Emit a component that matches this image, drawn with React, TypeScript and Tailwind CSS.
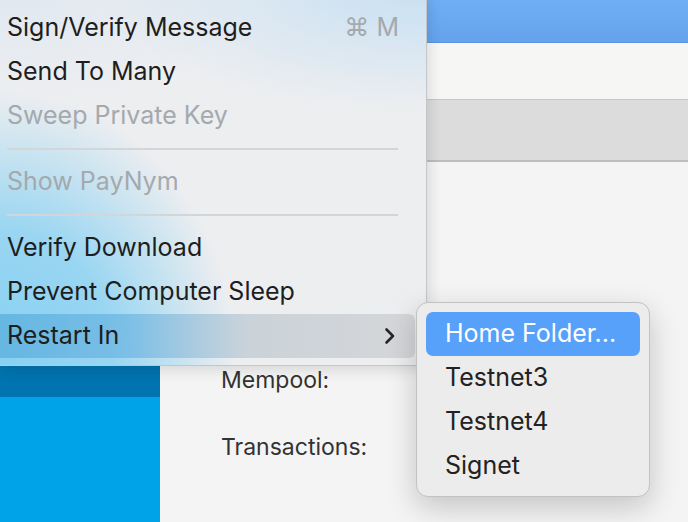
import React from "react";

function Chevron() {
  return (
    <svg width="12" height="18" viewBox="0 0 12 18" fill="none">
      <path d="M2.5 2.5 L9 9 L2.5 15.5" stroke="#262626" strokeWidth="2.6" strokeLinecap="round" strokeLinejoin="round" />
    </svg>
  );
}

function Item({ label, disabled, shortcut }: { label: string; disabled?: boolean; shortcut?: string }) {
  return (
    <div className="h-[44px] flex items-center justify-between pl-[7px] pr-[27px]">
      <span className={disabled ? "text-[#a4a9ae]" : "text-[#1e1e1e]"}>{label}</span>
      {shortcut && <span className="text-[#a4a9ae]">{shortcut}</span>}
    </div>
  );
}

function Sep() {
  return (
    <div className="h-[22px] flex items-center pl-[7px]">
      <div className="w-[391px] h-[2px] bg-[#d3d6d9]" />
    </div>
  );
}

export default function App() {
  return (
    <div className="relative w-[688px] h-[522px] overflow-hidden bg-[#f4f4f4] font-['Inter','DejaVu_Sans',sans-serif]">
      {/* background window */}
      <div className="flex flex-col h-full">
        <div className="h-[43px] bg-[linear-gradient(#70aef4,#64a2ed)] border-b border-[#5b94dd]" />
        <div className="h-[57px] bg-[#f6f6f5] border-b border-[#c6c6c6]" />
        <div className="h-[62px] bg-[#dcdcdc] border-b-2 border-[#bdbdbd]" />
        <div className="flex flex-1">
          <div className="w-[160px] bg-[#00a2e8] pt-[202px]">
            <div className="h-[33px] bg-[#0074b0]" />
          </div>
          <div className="flex-1 pl-[61px] pt-[202px] text-[23px] text-[#333333]">
            <div className="h-[32px] flex items-center">Mempool:</div>
            <div className="h-[35px]" />
            <div className="h-[32px] flex items-center">Transactions:</div>
          </div>
        </div>
      </div>

      {/* main menu */}
      <div className="absolute left-0 top-[-10px] w-[427px] h-[376px] rounded-br-[10px] rounded-tr-[10px] border-r border-b border-[#c3c6ca] shadow-[2px_4px_14px_rgba(0,0,0,0.12)] bg-[radial-gradient(ellipse_235px_270px_at_0px_370px,rgba(136,209,243,1)_0%,rgba(144,211,242,0.9)_48%,rgba(236,238,240,0)_100%),radial-gradient(ellipse_330px_120px_at_100%_0%,#c7e0f3_0%,rgba(236,238,240,0)_100%),radial-gradient(ellipse_260px_110px_at_0%_0%,#dfe8f0_0%,rgba(236,238,240,0)_100%),linear-gradient(#edeef0,#edeef0)] pt-[16px] text-[25px]">
        <Item label="Sign/Verify Message" shortcut="⌘ M" />
        <Item label="Send To Many" />
        <Item label="Sweep Private Key" disabled />
        <Sep />
        <Item label="Show PayNym" disabled />
        <Sep />
        <Item label="Verify Download" />
        <Item label="Prevent Computer Sleep" />
        <div className="h-[44px] mr-[11px] rounded-r-[6px] flex items-center justify-between pl-[7px] pr-[19px] bg-[linear-gradient(to_right,rgba(96,178,224,0.85)_0%,rgba(110,182,226,0.72)_32%,rgba(196,206,214,0.85)_60%,#d5d6d8_100%)]">
          <span className="text-[#1e1e1e]">Restart In</span>
          <Chevron />
        </div>
      </div>

      {/* submenu */}
      <div className="absolute left-[416px] top-[302px] w-[234px] h-[195px] rounded-[12px] bg-[#ececec] border border-[#c2c2c2] shadow-[0_10px_30px_rgba(0,0,0,0.2)] p-[9px] text-[25px]">
        <div className="h-[44px] rounded-[7px] bg-[#57a1fa] text-white flex items-center pl-[19px]">Home Folder...</div>
        <div className="h-[44px] flex items-center pl-[19px] text-[#222222]">Testnet3</div>
        <div className="h-[44px] flex items-center pl-[19px] text-[#222222]">Testnet4</div>
        <div className="h-[44px] flex items-center pl-[19px] text-[#222222]">Signet</div>
      </div>
    </div>
  );
}
